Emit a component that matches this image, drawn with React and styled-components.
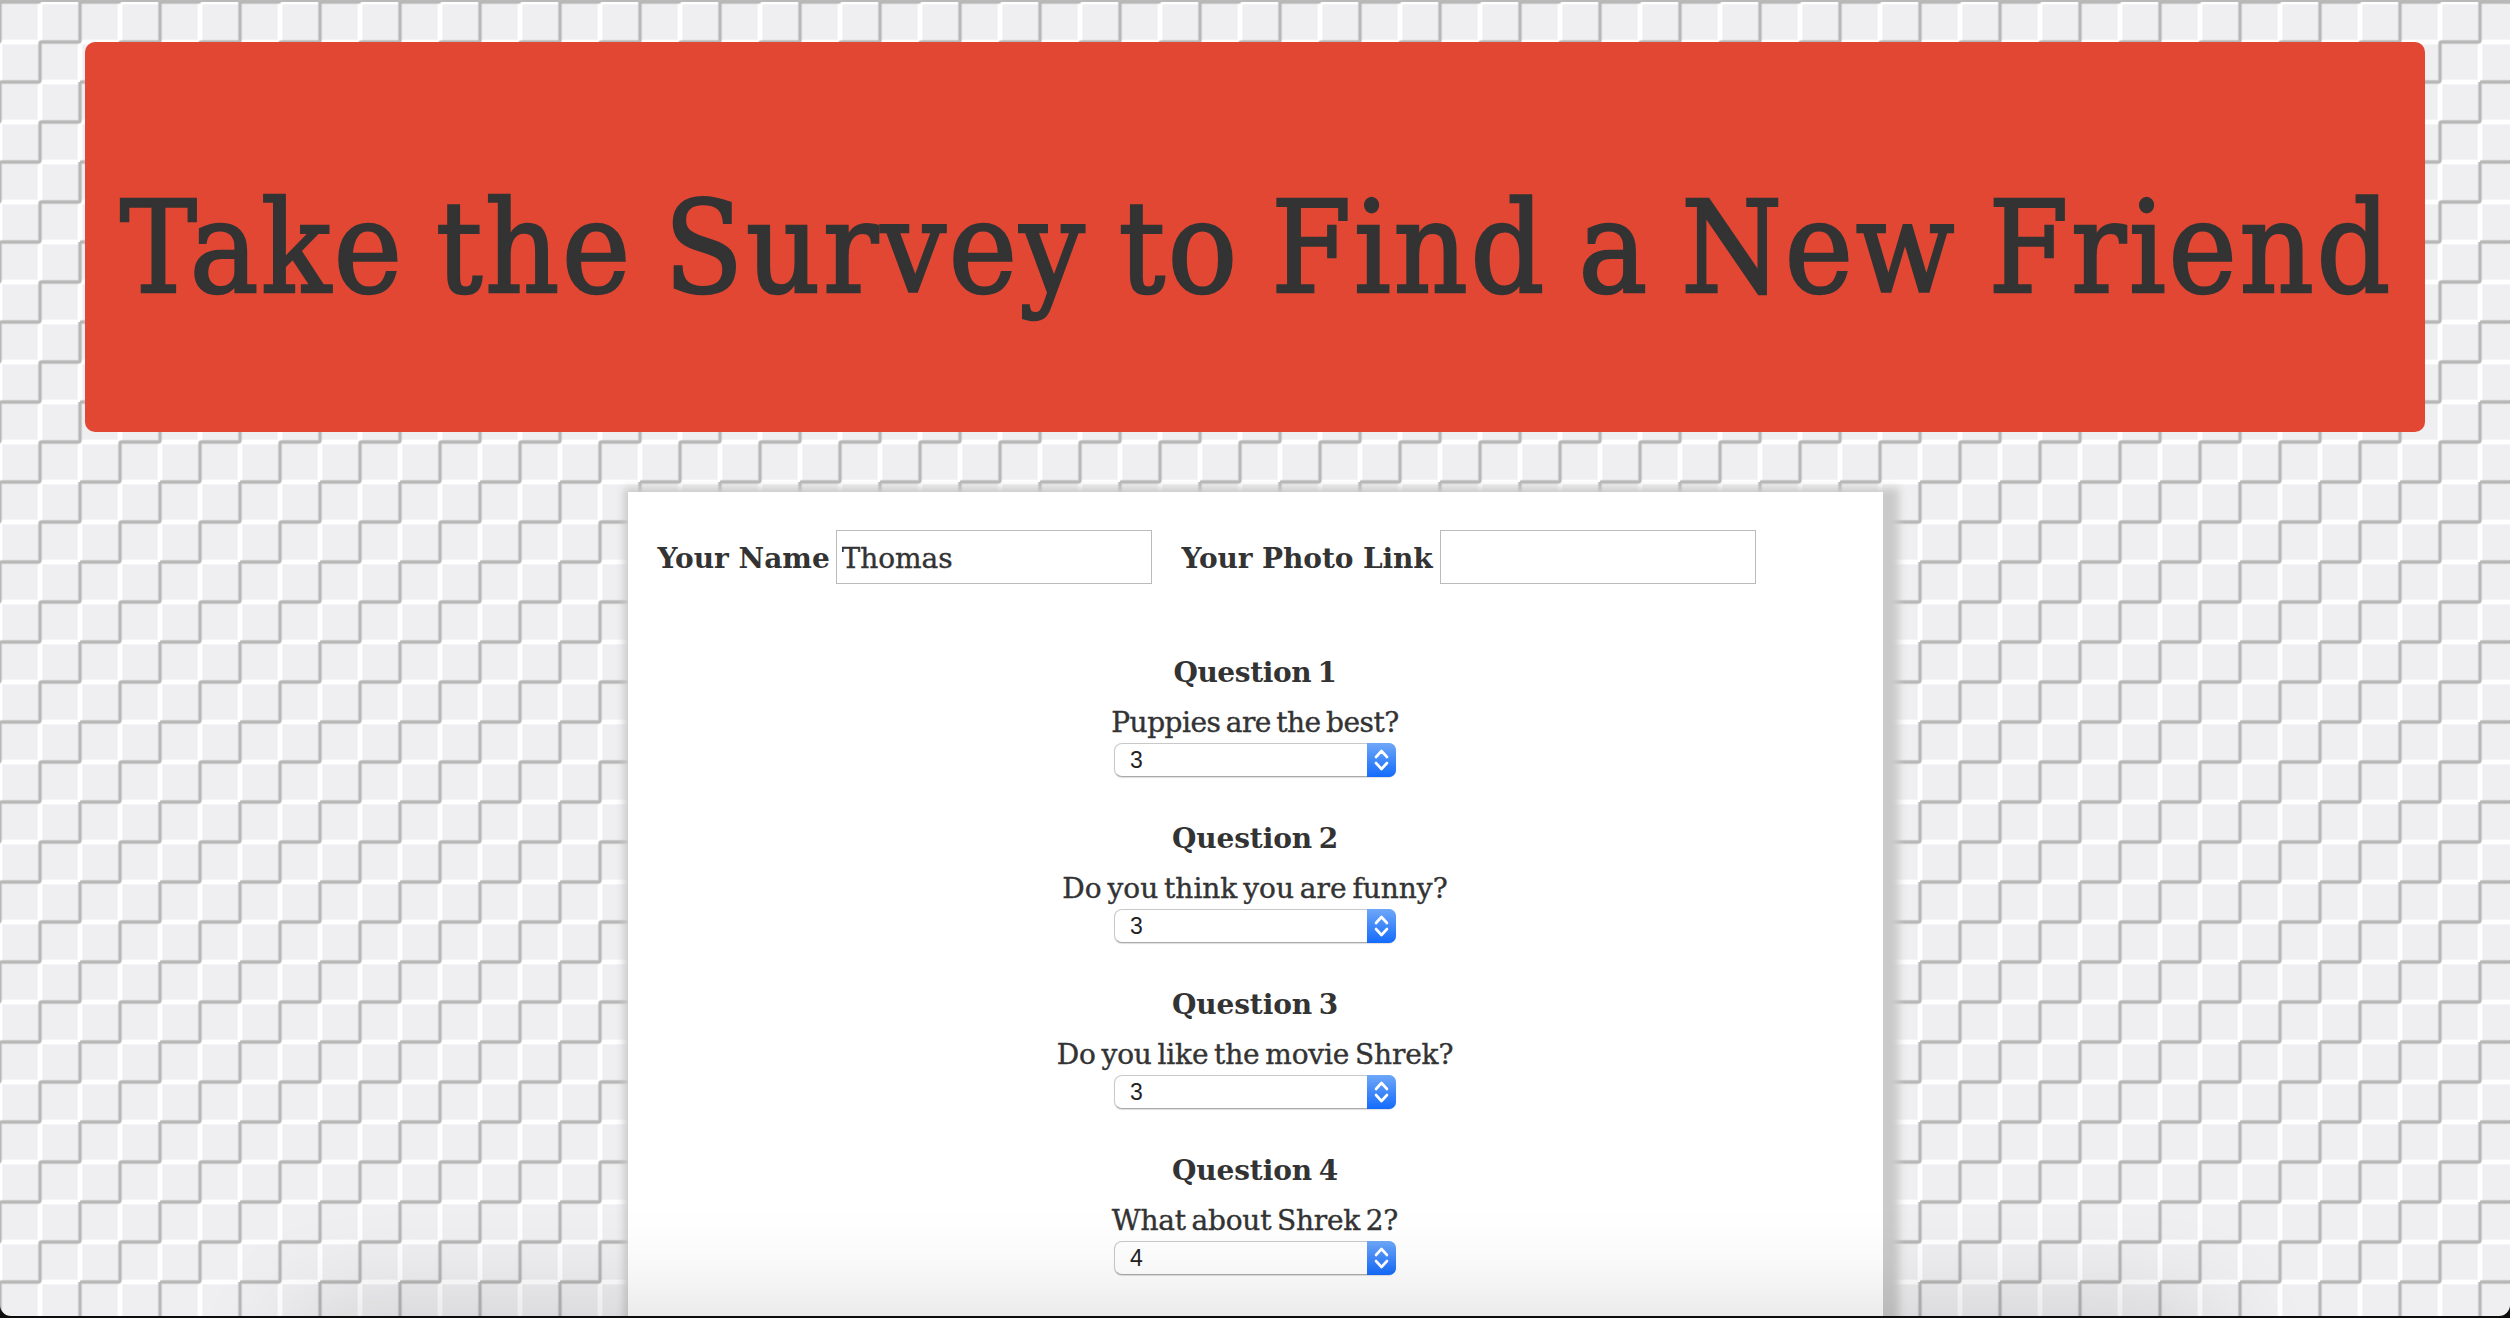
import React from "react";
import styled, { createGlobalStyle } from "styled-components";

const steps =
  "M-2 40Q0 40 0 38.500M80 0V38Q80 40 78 40H42Q40 40 40 42V78Q40 80 38 80H2Q0 80 0 82M40 -2Q40 0 38 0H2Q0 0 0 2V38Q0 40 -2 40M80 2Q80 0 82 0";

const tile = encodeURIComponent(`<svg xmlns="http://www.w3.org/2000/svg" width="80" height="80">
<rect width="80" height="80" fill="#efeef0"/>
<g fill="none" stroke-linejoin="round">
<path stroke="#fff" stroke-opacity=".5" stroke-width="5.500" d="M40 -2V40M80 40V82M0 40V82M0 40H40M40 80H80M40 0H80"/>
<path stroke="#fff" stroke-width="4" d="M40 -2V40M80 40V82M0 40V82M0 40H40M40 80H80M40 0H80"/>
<path stroke="#b8b8b8" stroke-opacity=".35" stroke-width="4.600" d="${steps}"/>
<path stroke="#b8b8b8" stroke-width="2.800" d="${steps}"/>
</g></svg>`);

const GlobalStyle = createGlobalStyle`
  * { box-sizing: border-box; }
  html { background: #0c0d0c; }
  body { margin: 0; overflow: hidden; }
`;

const Page = styled.main`
  position: relative;
  height: 1316px;
  margin-bottom: 2px;
  overflow: hidden;
  padding: 42px 85px 0;
  border-radius: 0 0 11px 11px;
  background: #efeef0 url("data:image/svg+xml,${tile}") 0 2px / 80px 80px;
  box-shadow: inset 0 2px 0 #b9b9b9;
  font-family: "DejaVu Serif", serif;
  color: #333;
`;

const BottomShade = styled.div`
  position: absolute;
  top: 100%;
  left: 300px;
  right: 300px;
  height: 200px;
  box-shadow: 0 0 110px rgba(0, 0, 0, 0.16);
  pointer-events: none;
`;

const Banner = styled.header`
  height: 390px;
  display: flex;
  align-items: center;
  justify-content: center;
  border-radius: 10px;
  background: #e24733;
`;

const Title = styled.h1`
  margin: 22px 0 0;
  padding-left: 3px;
  font-family: "DejaVu Serif Condensed", "DejaVu Serif", serif;
  font-stretch: condensed;
  font-size: 128px;
  line-height: 1.2;
  font-weight: 400;
  white-space: nowrap;
  -webkit-text-stroke: 2.5px #333;
`;

const Fit = styled.span`
  letter-spacing: ${(p) => p.$track || 0}px;
  word-spacing: ${(p) => p.$word || 0}px;
  white-space: nowrap;
`;

const Card = styled.section`
  width: 1255px;
  height: 900px;
  margin: 60px auto 0;
  padding: 38px 30px 0;
  background: #fff;
  box-shadow: 6px 6px 8px 10px #cacaca;
`;

const Row = styled.div`
  display: flex;
  align-items: center;
  gap: 30px;
  height: 54px;
`;

const Field = styled.label`
  display: grid;
  grid-template-columns: ${(p) => p.$label}px 316px;
  align-items: center;
  font-size: 28px;
  line-height: 36px;
  font-weight: 700;
  white-space: nowrap;

  > span {
    padding-top: 3px;
  }
`;

const Input = styled.input`
  width: 316px;
  height: 54px;
  padding: 2px 5px 0;
  border: 1px solid #bbb;
  background: #fff;
  color: #333;
  font: 400 28px "DejaVu Serif", serif;
  -webkit-text-stroke: 0.4px #333;
`;

const Questions = styled.div`
  display: flex;
  flex-direction: column;
  align-items: center;
  padding-top: 69px;
`;

const Question = styled.div`
  display: flex;
  flex-direction: column;
  align-items: center;
  height: 166px;
`;

const Heading = styled.h3`
  margin: 0 0 10px;
  font-size: 28px;
  line-height: 40px;
`;

const Prompt = styled.p`
  margin: 0;
  font-size: 28px;
  line-height: 40px;
  -webkit-text-stroke: 0.4px #333;
`;

const Select = styled.div`
  display: flex;
  width: 282px;
  height: 34px;
  border-radius: 8px;
  border: 1px solid #c9c9c9;
  border-bottom-color: #aaa;
  box-shadow: 0 1px 1px #0002;
  background: #fff;
`;

const Value = styled.span`
  flex: 1;
  padding-left: 15px;
  font: 23px/33px "Liberation Sans", sans-serif;
  color: #222;
`;

const Arrows = styled.span`
  width: 29px;
  height: 34px;
  margin: -1px -1px 0 0;
  border-radius: 0 7px 7px 0;
  background: linear-gradient(#6ea7f8, #146bfc);
`;

const questions = [
  { heading: "Question 1", hTrack: -0.4, prompt: "Puppies are the best?", pTrack: -0.5, value: "3" },
  { heading: "Question 2", hTrack: -0.1, prompt: "Do you think you are funny?", pTrack: 0, value: "3" },
  { heading: "Question 3", hTrack: -0.1, prompt: "Do you like the movie Shrek?", pTrack: -0.15, value: "3" },
  { heading: "Question 4", hTrack: -0.1, prompt: "What about Shrek 2?", pTrack: -0.2, value: "4" },
];

export default function App() {
  return (
    <>
      <GlobalStyle />
      <Page>
        <Banner>
          <Title><Fit $track={2.8} $word={-8}>Take the Survey to Find a New Friend</Fit></Title>
        </Banner>
        <Card>
          <Row>
            <Field $label={178}><Fit>Your Name</Fit><Input defaultValue="Thomas" /></Field>
            <Field $label={258}><Fit $track={-0.1}>Your Photo Link</Fit><Input /></Field>
          </Row>
          <Questions>
            {questions.map((q) => (
              <Question key={q.heading}>
                <Heading><Fit $track={q.hTrack} $word={-3}>{q.heading}</Fit></Heading>
                <Prompt><Fit $track={q.pTrack} $word={-3}>{q.prompt}</Fit></Prompt>
                <Select>
                  <Value>{q.value}</Value>
                  <Arrows>
                    <svg width="29" height="34" fill="none" stroke="#fff" strokeWidth="2.6" strokeLinecap="round" strokeLinejoin="round">
                      <path d="M9 14l5.500-6 5.500 6M9 20l5.500 6 5.500-6" />
                    </svg>
                  </Arrows>
                </Select>
              </Question>
            ))}
          </Questions>
        </Card>
        <BottomShade />
      </Page>
    </>
  );
}
